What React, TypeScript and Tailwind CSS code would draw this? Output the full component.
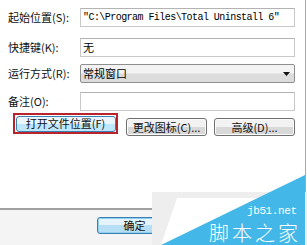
import React from 'react';

const cjk = { fontFamily: '"Noto Sans CJK SC", "Noto Sans", sans-serif' };
const mono = { fontFamily: '"Liberation Mono", "DejaVu Sans Mono", monospace' };

function Field({ label, children }: { label: string; children: React.ReactNode }) {
  return (
    <div className="flex items-center">
      <div className="w-[72px] text-[11px] leading-none text-[#111]">{label}</div>
      {children}
    </div>
  );
}

function WinButton({ label, className = '' }: { label: string; className?: string }) {
  return (
    <div
      className={`h-[18px] rounded-[3px] border border-[#707070] bg-gradient-to-b from-[#f2f2f2] from-50% to-[#d8d8d8] to-50% shadow-[inset_0_0_0_1px_#fcfcfc] flex items-center justify-center text-[11px] leading-none text-[#111] ${className}`}
    >
      {label}
    </div>
  );
}

export default function App() {
  return (
    <div className="w-[307px] h-[245px] relative overflow-hidden bg-white" style={cjk}>
      <div className="h-[208px] w-[306px] border-r border-[#a8a8a8] pl-[8px] pt-[8px]">
        <Field label="起始位置(S):">
          <div className="w-[215px] h-[19px] border border-[#c9c9c9] border-t-[#b3b3b3] flex items-center pl-[2px] text-[10px] tracking-[-0.55px] text-black" style={mono}>
            "C:\Program Files\Total Uninstall 6"
          </div>
        </Field>
        <div className="mt-[11px]">
          <Field label="快捷键(K):">
            <div className="w-[215px] h-[19px] border border-[#c9c9c9] border-t-[#b3b3b3] flex items-center pl-[2px] text-[11px] leading-none text-black">
              无
            </div>
          </Field>
        </div>
        <div className="mt-[7px]">
          <Field label="运行方式(R):">
            <div className="w-[215px] h-[19px] rounded-[2px] border border-[#8e8f8f] bg-gradient-to-b from-[#f3f3f3] from-45% to-[#dcdcdc] to-55% flex items-center justify-between pl-[2px] pr-[4px] text-[11px] leading-none text-black">
              <span>常规窗口</span>
              <svg width="7" height="4" viewBox="0 0 7 4">
                <polygon points="0,0 7,0 3.5,4" fill="#111" />
              </svg>
            </div>
          </Field>
        </div>
        <div className="mt-[9px]">
          <Field label="备注(O):">
            <div className="w-[215px] h-[19px] border border-[#c9c9c9] border-t-[#b3b3b3]" />
          </Field>
        </div>
        <div className="mt-[2px] flex items-start">
          <div className="ml-[5px] w-[105px] h-[21px] border-[2px] border-[#b8232c] flex items-center justify-center">
            <div className="w-[100px] h-[16px] rounded-[3px] border border-[#3c7fb1] bg-gradient-to-b from-[#eaf6fd] from-50% to-[#bee6fd] to-50% flex items-center justify-center text-[11px] leading-none text-[#111]">
              打开文件位置(F)
            </div>
          </div>
          <WinButton label="更改图标(C)..." className="ml-[8px] mt-[5px] w-[81px]" />
          <WinButton label="高级(D)..." className="ml-[7px] mt-[5px] w-[81px]" />
        </div>
      </div>
      <div className="h-[37px] border-t-[2px] border-[#a0a0a0] bg-[#f4f4f4] pl-[97px] pt-[7px]">
        <div className="w-[75px] h-[17px] rounded-[3px] border border-[#3c7fb1] bg-gradient-to-b from-[#e5f4fc] from-50% to-[#b6dff5] to-50% shadow-[inset_0_0_0_1px_#8fd0f0] flex items-center justify-center text-[11px] leading-none text-[#111]">
          确定
        </div>
      </div>

      <div className="absolute left-[152px] top-[192px] w-[155px] h-[53px] bg-[#eeeeee]" />
      <svg className="absolute left-0 top-0" width="307" height="245" viewBox="0 0 307 245">
        <polygon points="177,198 259,198 165,245 161,245" fill="#ffffff" />
        <polygon points="305,175 305,245 161,245" fill="#43b8e8" />
      </svg>
      <div className="absolute left-[247px] top-[206px] text-[11px] leading-[11px] text-white tracking-[-0.4px]" style={mono}>
        jb51.net
      </div>
      <div className="absolute left-[209px] top-[223px] text-[20px] leading-[20px] text-white font-light tracking-[3px]">
        脚本之家
      </div>
    </div>
  );
}
